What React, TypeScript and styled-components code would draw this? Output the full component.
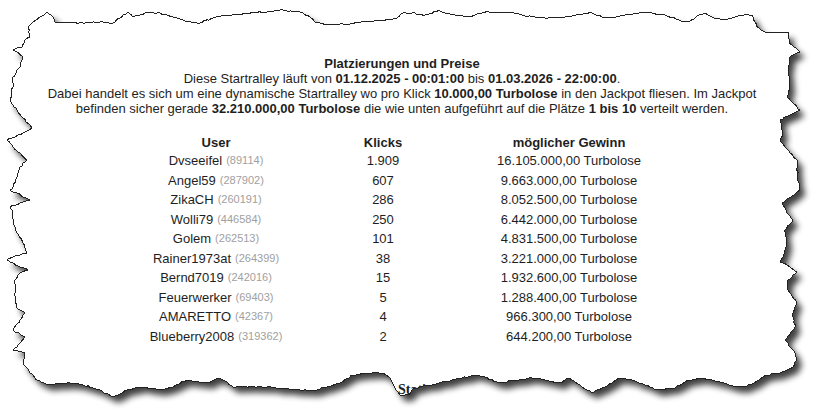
import React, { useMemo } from "react";
import styled, { createGlobalStyle } from "styled-components";

const Global = createGlobalStyle`
  html, body { margin: 0; padding: 0; background: #fff; }
  body { font-family: "Liberation Sans", Arial, sans-serif; }
`;

const Page = styled.div`
  position: relative;
  width: 824px;
  height: 418px;
  overflow: hidden;
  background: #fff;
  color: #1e1e1e;
  font-size: 13px;
  line-height: 15px;
`;

const Content = styled.div`
  display: flex;
  flex-direction: column;
  align-items: center;
  padding: 56px 20px 0 0;
`;

const Intro = styled.div`
  text-align: center;
  white-space: nowrap;
  b { font-weight: bold; }
`;

const Table = styled.div`
  display: grid;
  grid-template-columns: 200px 134px 238px;
  margin-top: 17px;
`;

const Cell = styled.div<{ $head?: boolean }>`
  height: ${(p) => (p.$head ? "18px" : "19.5px")};
  display: flex;
  align-items: center;
  justify-content: center;
  white-space: nowrap;
  font-weight: ${(p) => (p.$head ? "bold" : "normal")};
`;

const UserId = styled.span`
  color: #a0a0a0;
  font-size: 11px;
  margin-left: 4px;
`;

const Footer = styled.div`
  align-self: stretch;
  margin-top: 36px;
  padding-left: 398px;
  font-family: "Liberation Serif", "Times New Roman", serif;
  font-weight: bold;
  font-size: 14px;
  line-height: 16px;
  color: #222;
  white-space: nowrap;
`;

const Edge = styled.svg`
  position: absolute;
  left: 0;
  top: 0;
  width: 824px;
  height: 418px;
  pointer-events: none;
`;

const rows: [string, string, string, string][] = [
  ["Dvseeifel", "89114", "1.909", "16.105.000,00"],
  ["Angel59", "287902", "607", "9.663.000,00"],
  ["ZikaCH", "260191", "286", "8.052.500,00"],
  ["Wolli79", "446584", "250", "6.442.000,00"],
  ["Golem", "262513", "101", "4.831.500,00"],
  ["Rainer1973at", "264399", "38", "3.221.000,00"],
  ["Bernd7019", "242016", "15", "1.932.600,00"],
  ["Feuerwerker", "69403", "5", "1.288.400,00"],
  ["AMARETTO", "42367", "4", "966.300,00"],
  ["Blueberry2008", "319362", "2", "644.200,00"],
];

const P: number[][] = [
  [33, 22], [47, 12], [53, 17], [55, 22], [70, 23], [83, 23], [100, 22], [113, 23], [128, 12], [133, 17],
  [140, 15], [147, 12], [157, 13], [167, 15], [177, 18], [187, 22], [200, 23], [213, 18], [227, 15],
  [247, 13], [267, 12], [283, 10], [300, 12], [310, 17], [317, 23], [333, 25], [350, 24], [367, 22],
  [383, 20], [397, 18], [403, 13], [412, 13], [425, 15], [439, 10], [445, 13], [455, 15], [469, 17],
  [479, 13], [489, 12], [499, 13], [512, 12], [522, 15], [535, 17], [552, 18], [565, 17], [579, 15],
  [592, 13], [602, 17], [612, 18], [625, 15], [639, 13], [652, 13], [665, 15], [679, 20], [689, 22],
  [699, 15], [705, 13], [712, 17], [722, 20], [732, 18], [742, 15], [752, 15], [755, 22], [759, 28],
  [765, 32], [789, 33],
  [789, 42], [794, 47], [800, 52], [790, 57], [788, 70], [790, 87], [787, 97], [800, 110], [780, 120],
  [783, 133], [780, 140], [785, 147], [797, 160], [798, 177], [800, 190], [782, 203], [787, 213],
  [793, 220], [785, 230], [787, 243], [783, 257], [780, 262], [790, 267], [797, 272], [788, 280],
  [788, 290], [797, 303], [793, 313], [795, 327], [785, 340], [795, 353], [797, 360], [793, 367],
  [780, 373],
  [767, 375], [759, 380], [745, 387], [729, 385], [712, 380], [699, 378], [689, 380], [675, 388],
  [659, 390], [645, 385], [632, 380], [619, 378], [605, 387], [592, 393], [582, 387], [569, 378],
  [559, 383], [545, 380], [532, 378], [519, 380], [499, 383], [485, 377], [475, 375], [462, 378],
  [445, 382], [429, 385], [415, 388], [408, 395], [400, 395], [395, 388], [390, 378], [383, 373],
  [367, 373], [353, 375], [340, 383], [317, 390], [300, 390], [267, 387], [233, 387], [220, 378],
  [207, 383], [187, 380], [173, 387], [160, 390], [140, 387], [127, 390], [113, 397], [100, 390],
  [83, 385], [67, 383], [47, 385], [37, 380],
  [30, 373], [23, 363], [25, 352], [13, 350], [20, 343], [25, 337], [13, 330], [20, 320], [25, 313],
  [17, 308], [15, 293], [15, 280], [20, 273], [28, 270], [20, 267], [7, 260], [13, 257], [27, 253],
  [23, 243], [17, 233], [13, 223], [13, 213], [10, 207], [20, 203], [30, 200], [23, 197], [17, 193],
  [10, 190], [13, 187], [17, 177], [20, 167], [27, 160], [20, 153], [13, 147], [7, 140], [23, 133],
  [32, 128], [23, 118], [13, 105], [10, 100], [13, 87], [13, 77], [20, 67], [23, 57], [13, 50],
  [22, 47], [25, 40], [30, 37], [28, 27],
];

function mulberry32(a: number) {
  return function () {
    a |= 0;
    a = (a + 0x6d2b79f5) | 0;
    let t = Math.imul(a ^ (a >>> 15), 1 | a);
    t = (t + Math.imul(t ^ (t >>> 7), 61 | t)) ^ t;
    return ((t ^ (t >>> 14)) >>> 0) / 4294967296;
  };
}

function buildPath(): string {
  const rnd = mulberry32(12345);
  const out: number[][] = [];
  for (let i = 0; i < P.length; i++) {
    const a = P[i];
    const b = P[(i + 1) % P.length];
    const len = Math.hypot(b[0] - a[0], b[1] - a[1]);
    const n = Math.max(1, Math.round(len / 2.5));
    for (let k = 0; k < n; k++) {
      const t = k / n;
      const jx = k === 0 ? 0 : (rnd() - 0.5) * 1.4;
      const jy = k === 0 ? 0 : (rnd() - 0.5) * 1.4;
      out.push([a[0] + (b[0] - a[0]) * t + jx, a[1] + (b[1] - a[1]) * t + jy]);
    }
  }
  return "M" + out.map((p) => `${p[0].toFixed(1)} ${p[1].toFixed(1)}`).join(" L") + " Z";
}

function TornEdge() {
  const paper = useMemo(buildPath, []);
  const outside = `M-20 -20 H844 V438 H-20 Z ${paper}`;
  return (
    <Edge viewBox="0 0 824 418">
      <defs>
        <clipPath id="outsideClip">
          <path d={outside} clipRule="evenodd" />
        </clipPath>
        <filter id="blur" x="-10%" y="-10%" width="120%" height="120%">
          <feGaussianBlur stdDeviation="3" />
        </filter>
      </defs>
      <path d={outside} fill="#fff" fillRule="evenodd" />
      <g clipPath="url(#outsideClip)">
        <path d={paper} transform="translate(5 6)" fill="#000" opacity="0.75" filter="url(#blur)" />
      </g>
      <path d={paper} fill="none" stroke="#222" strokeWidth="1" shapeRendering="crispEdges" />
    </Edge>
  );
}

export default function App() {
  return (
    <Page>
      <Global />
      <Content>
        <Intro>
          <b>Platzierungen und Preise</b>
          <br />
          Diese Startralley läuft von <b>01.12.2025 - 00:01:00</b> bis <b>01.03.2026 - 22:00:00</b>.
          <br />
          Dabei handelt es sich um eine dynamische Startralley wo pro Klick <b>10.000,00 Turbolose</b> in den
          Jackpot fliesen. Im Jackpot
          <br />
          befinden sicher gerade <b>32.210.000,00 Turbolose</b> die wie unten aufgeführt auf die Plätze{" "}
          <b>1 bis 10</b> verteilt werden.
        </Intro>
        <Table>
          <Cell $head>User</Cell>
          <Cell $head>Klicks</Cell>
          <Cell $head>möglicher Gewinn</Cell>
          {rows.map(([name, id, clicks, win]) => (
            <React.Fragment key={name}>
              <Cell>
                {name}
                <UserId>({id})</UserId>
              </Cell>
              <Cell>{clicks}</Cell>
              <Cell>{win} Turbolose</Cell>
            </React.Fragment>
          ))}
        </Table>
        <Footer>Statistiken</Footer>
      </Content>
      <TornEdge />
    </Page>
  );
}
